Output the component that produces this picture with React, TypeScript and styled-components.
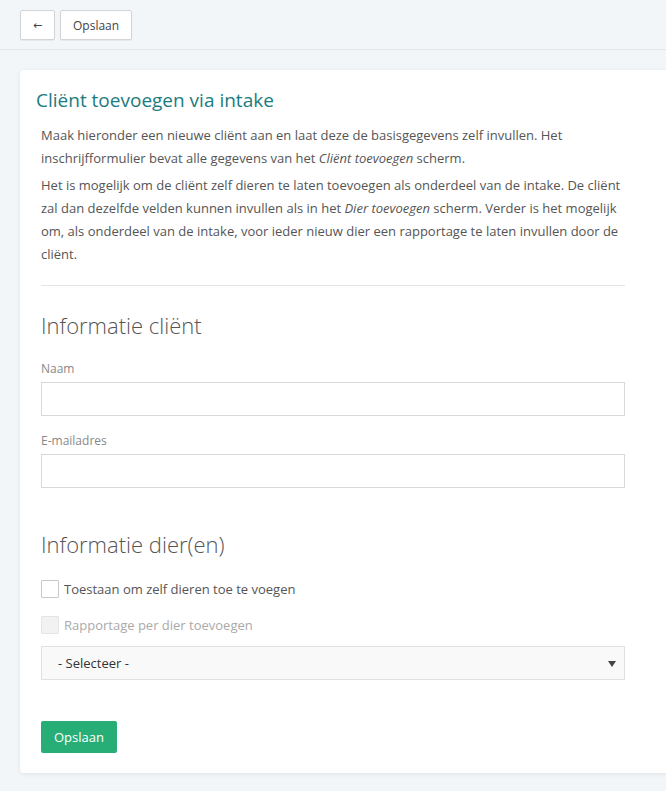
import React from "react";
import styled, { createGlobalStyle } from "styled-components";

const GlobalStyle = createGlobalStyle`
  html, body {
    margin: 0;
    padding: 0;
    background: #f3f6f9;
    font-family: "Open Sans", "Liberation Sans", sans-serif;
    color: #555;
  }
  * { box-sizing: border-box; }
`;

const Page = styled.div`
  min-height: 791px;
  background: #f3f6f9;
  overflow: hidden;
`;

const Toolbar = styled.div`
  display: flex;
  gap: 5px;
  padding: 10px 20px 9px;
  border-bottom: 1px solid #e2e6ea;
`;

const ToolButton = styled.button<{ $icon?: boolean }>`
  height: 30px;
  min-width: ${(p) => (p.$icon ? "35px" : "71px")};
  padding: 0 ${(p) => (p.$icon ? "8px" : "12px")};
  background: #fff;
  border: 1px solid #d4d4d4;
  border-radius: 2px;
  box-shadow: 0 1px 1px rgba(0, 0, 0, 0.06);
  font-family: ${(p) => (p.$icon ? '"DejaVu Sans", sans-serif' : "inherit")};
  font-size: ${(p) => (p.$icon ? "11px" : "12px")};
  color: #444;
  cursor: pointer;
`;

const Card = styled.div`
  margin: 20px -20px 18px 20px;
  background: #fff;
  border-radius: 4px;
  box-shadow: 0 1px 4px rgba(0, 0, 0, 0.08);
  padding: 17px 16px 20px;
`;

const Title = styled.h1`
  margin: 0 0 11px;
  font-size: 19px;
  font-weight: 400;
  color: #1b7b80;
  line-height: 26px;
`;

const Body = styled.div`
  width: 584px;
  margin-left: 5px;
`;

const Text = styled.p`
  margin: 0 0 4px;
  font-size: 13px;
  line-height: 23px;
  color: #555;
`;

const Divider = styled.hr`
  border: 0;
  border-top: 1px solid #e4e4e4;
  margin: 19px 0 24px;
`;

const SectionTitle = styled.h2<{ $gap?: number }>`
  margin: ${(p) => p.$gap ?? 0}px 0 0;
  font-size: 22px;
  font-weight: 300;
  color: #555;
  line-height: 30px;
`;

const Field = styled.div`
  display: flex;
  flex-direction: column;
  margin-top: 20px;
  & + & {
    margin-top: 16px;
  }
`;

const Label = styled.label`
  font-size: 12px;
  color: #888;
  line-height: 18px;
  margin-bottom: 4px;
`;

const Input = styled.input`
  height: 34px;
  width: 100%;
  border: 1px solid #d9d9d9;
  border-radius: 0;
  background: #fff;
  font-family: inherit;
  font-size: 13px;
  padding: 0 10px;
`;

const CheckRow = styled.label<{ $disabled?: boolean }>`
  display: flex;
  align-items: center;
  gap: 5px;
  height: 17px;
  font-size: 13px;
  color: ${(p) => (p.$disabled ? "#aaa" : "#555")};
`;

const Box = styled.span<{ $disabled?: boolean }>`
  width: 18px;
  height: 18px;
  border: 1px solid ${(p) => (p.$disabled ? "#e4e4e4" : "#c8c8c8")};
  background: ${(p) => (p.$disabled ? "#f2f2f2" : "#fff")};
  border-radius: 1px;
  flex: none;
`;

const Checks = styled.div`
  display: flex;
  flex-direction: column;
  gap: 19px;
  margin-top: 21px;
`;

const SelectBox = styled.div`
  margin-top: 13px;
  height: 34px;
  border: 1px solid #e0e0e0;
  background: #f9f9f9;
  display: flex;
  align-items: center;
  justify-content: space-between;
  padding: 0 8px 0 16px;
  font-size: 13px;
  color: #333;
`;

const Caret = styled.span`
  width: 0;
  height: 0;
  border-left: 4px solid transparent;
  border-right: 4px solid transparent;
  border-top: 6px solid #444;
  margin-top: 1px;
`;

const SaveButton = styled.button`
  margin-top: 41px;
  height: 32px;
  padding: 0 13px;
  border: 0;
  border-radius: 2px;
  background: #27ae76;
  color: #fff;
  font-family: inherit;
  font-size: 13px;
  cursor: pointer;
`;

export default function App() {
  return (
    <Page>
      <GlobalStyle />
      <Toolbar>
        <ToolButton $icon>←</ToolButton>
        <ToolButton>Opslaan</ToolButton>
      </Toolbar>
      <Card>
        <Title>Cliënt toevoegen via intake</Title>
        <Body>
          <Text>
            Maak hieronder een nieuwe cliënt aan en laat deze de basisgegevens zelf invullen. Het
            inschrijfformulier bevat alle gegevens van het <em>Cliënt toevoegen</em> scherm.
          </Text>
          <Text>
            Het is mogelijk om de cliënt zelf dieren te laten toevoegen als onderdeel van de intake. De cliënt
            zal dan dezelfde velden kunnen invullen als in het <em>Dier toevoegen</em> scherm. Verder is het mogelijk
            om, als onderdeel van de intake, voor ieder nieuw dier een rapportage te laten invullen door de
            cliënt.
          </Text>
          <Divider />
          <SectionTitle>Informatie cliënt</SectionTitle>
          <Field>
            <Label>Naam</Label>
            <Input />
          </Field>
          <Field>
            <Label>E-mailadres</Label>
            <Input />
          </Field>
          <SectionTitle $gap={41}>Informatie dier(en)</SectionTitle>
          <Checks>
            <CheckRow>
              <Box />
              Toestaan om zelf dieren toe te voegen
            </CheckRow>
            <CheckRow $disabled>
              <Box $disabled />
              Rapportage per dier toevoegen
            </CheckRow>
          </Checks>
          <SelectBox>
            - Selecteer -
            <Caret />
          </SelectBox>
          <SaveButton>Opslaan</SaveButton>
        </Body>
      </Card>
    </Page>
  );
}
